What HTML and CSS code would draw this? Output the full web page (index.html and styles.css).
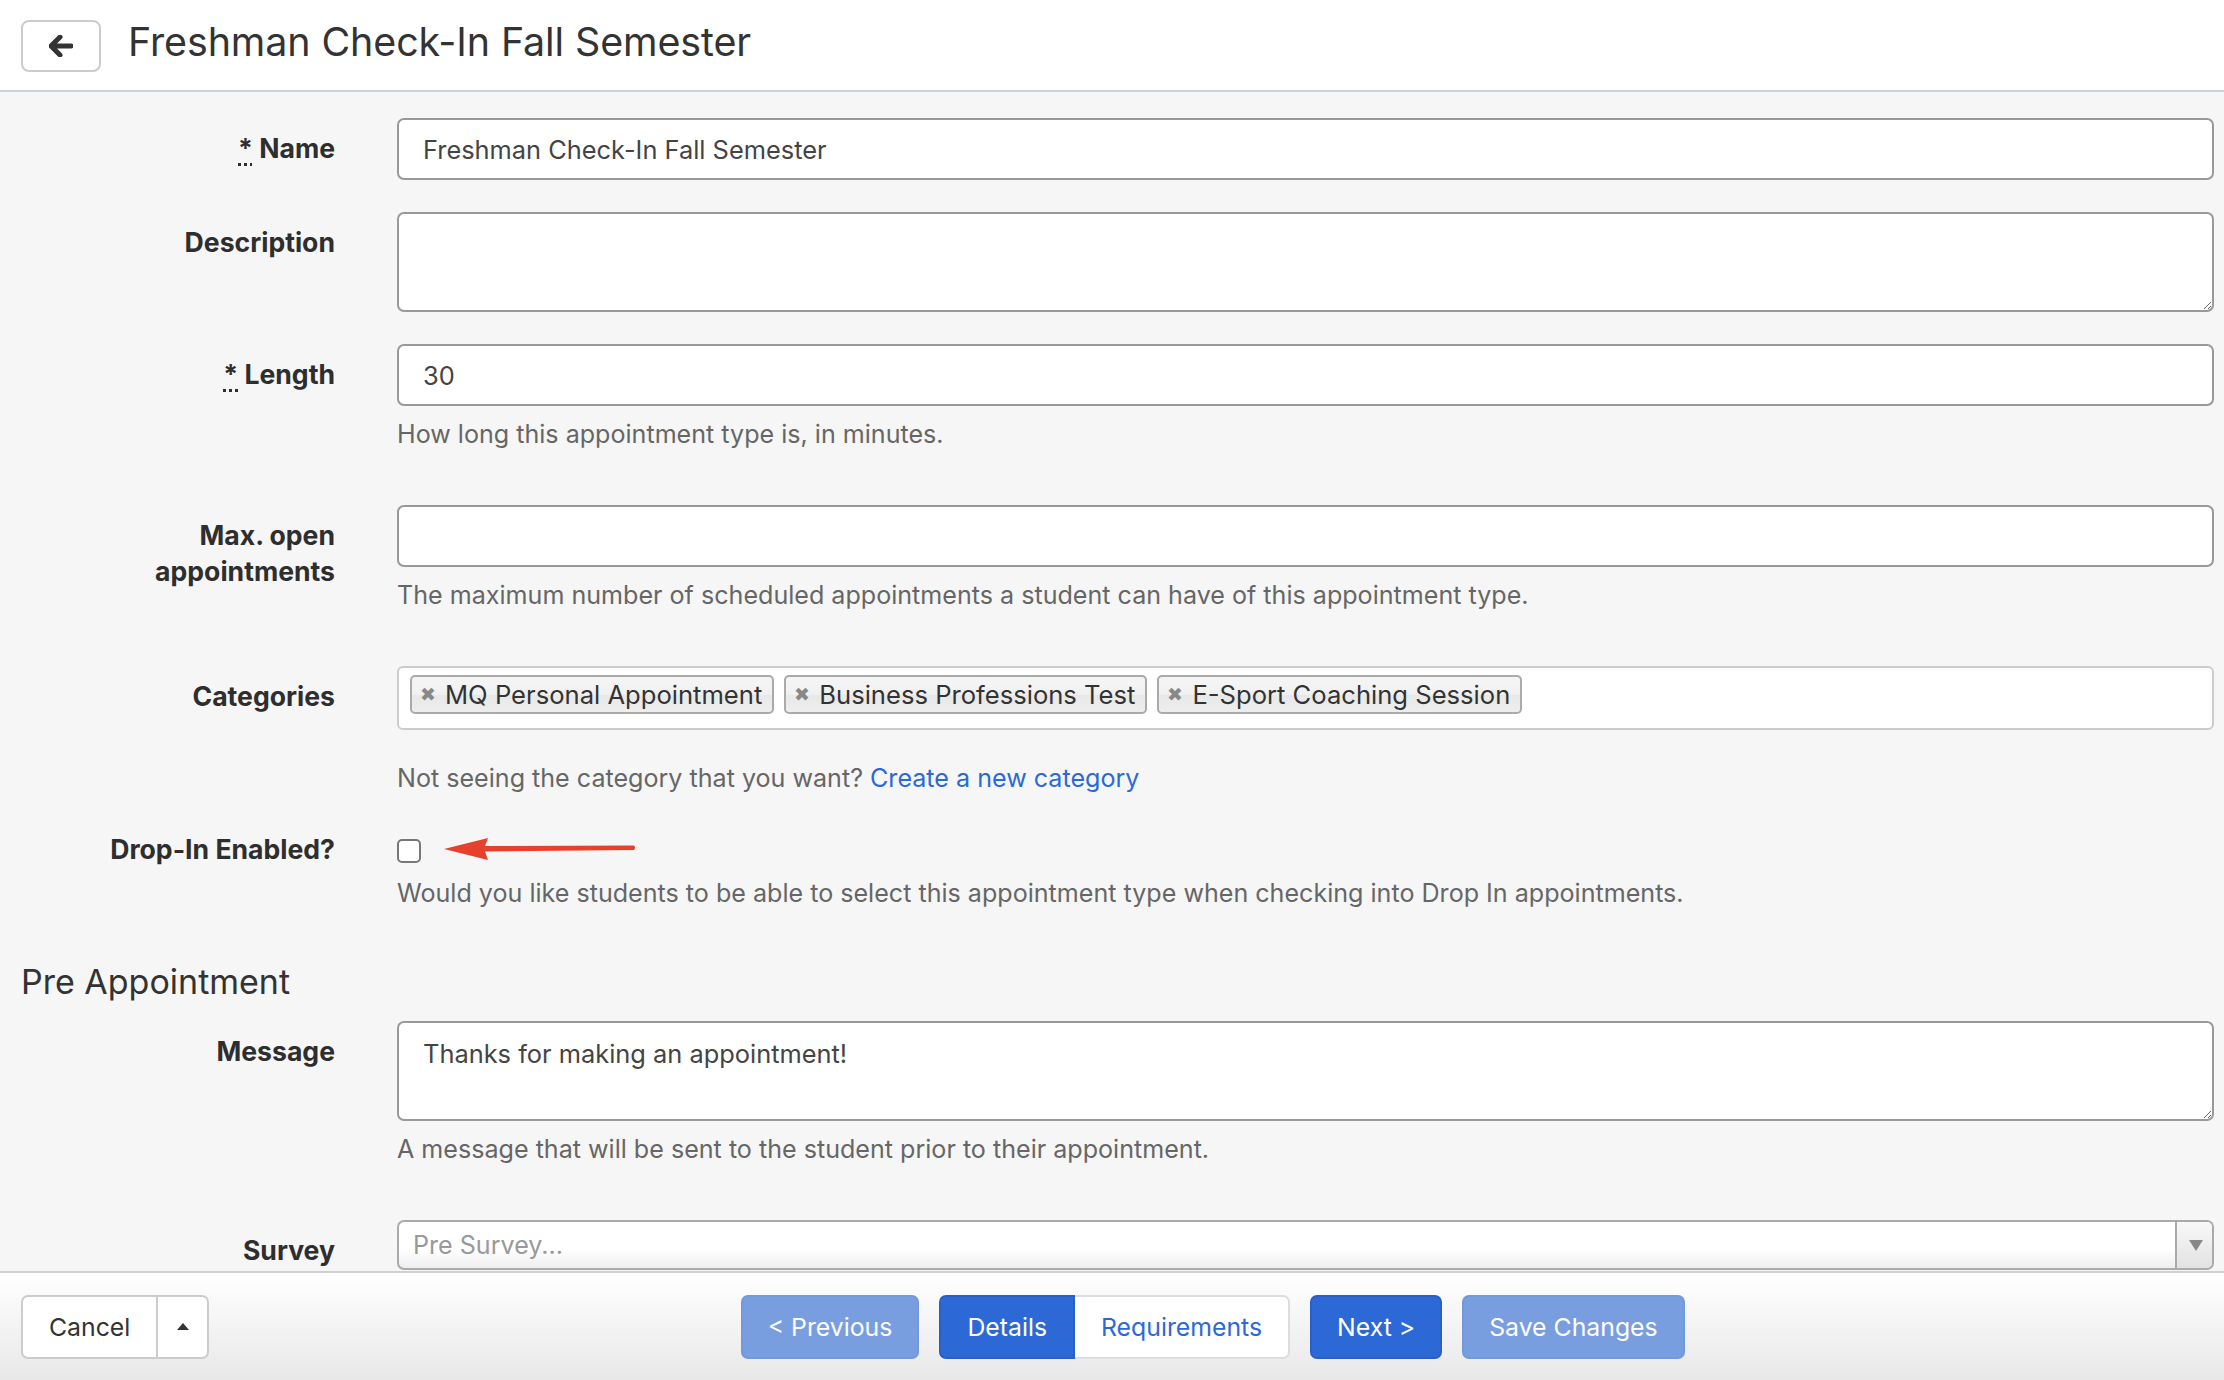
FILE: index.html
```html
<!DOCTYPE html>
<html lang="en">
<head>
  <meta charset="UTF-8">
  <title>Freshman Check-In Fall Semester</title>
  <link rel="stylesheet" href="styles.css">
</head>
<body>
  <header class="page-header">
    <a href="#" class="back-button" aria-label="Back">
      <svg width="24" height="22" viewBox="0 0 24 22">
        <path d="M11 2 L2 11 L11 20 M2.5 11 H22" fill="none" stroke="#333" stroke-width="5" stroke-linecap="round" stroke-linejoin="round"/>
      </svg>
    </a>
    <h1>Freshman Check-In Fall Semester</h1>
  </header>

  <main class="form">
    <div class="row">
      <label class="label"><abbr title="required">*</abbr> Name</label>
      <div class="control">
        <input class="text-input" type="text" value="Freshman Check-In Fall Semester">
      </div>
    </div>

    <div class="row">
      <label class="label">Description</label>
      <div class="control">
        <textarea class="text-area"></textarea>
      </div>
    </div>

    <div class="row">
      <label class="label"><abbr title="required">*</abbr> Length</label>
      <div class="control">
        <input class="text-input" type="text" value="30">
        <p class="help">How long this appointment type is, in minutes.</p>
      </div>
    </div>

    <div class="row">
      <label class="label">Max. open<br>appointments</label>
      <div class="control">
        <input class="text-input" type="text" value="">
        <p class="help">The maximum number of scheduled appointments a student can have of this appointment type.</p>
      </div>
    </div>

    <div class="row row-categories">
      <label class="label">Categories</label>
      <div class="control">
        <div class="chosen-box">
          <span class="tag"><span class="tag-close">&#10006;</span>MQ Personal Appointment</span>
          <span class="tag"><span class="tag-close">&#10006;</span>Business Professions Test</span>
          <span class="tag"><span class="tag-close">&#10006;</span>E-Sport Coaching Session</span>
        </div>
        <p class="help help-wide">Not seeing the category that you want? <a href="#" class="link">Create a new category</a></p>
      </div>
    </div>

    <div class="row row-check">
      <label class="label">Drop-In Enabled?</label>
      <div class="control">
        <div class="check-line">
          <input type="checkbox" class="checkbox">
          <svg class="pointer" width="192" height="26" viewBox="0 0 192 26">
            <path d="M0 13 L44 2 L41 10 L190 9.5 Q192 11.5 190 14 L41 15.5 L44 24 Z" fill="#e5412d"/>
          </svg>
        </div>
        <p class="help help-check">Would you like students to be able to select this appointment type when checking into Drop In appointments.</p>
      </div>
    </div>

    <h2 class="section-title">Pre Appointment</h2>

    <div class="row">
      <label class="label">Message</label>
      <div class="control">
        <textarea class="text-area">Thanks for making an appointment!</textarea>
        <p class="help">A message that will be sent to the student prior to their appointment.</p>
      </div>
    </div>

    <div class="row">
      <label class="label">Survey</label>
      <div class="control">
        <div class="chosen-single">
          <span class="placeholder">Pre Survey...</span>
          <span class="chosen-arrow"></span>
        </div>
      </div>
    </div>
  </main>

  <footer class="page-footer">
    <div class="btn-group">
      <button class="btn btn-plain">Cancel</button>
      <button class="btn btn-plain btn-caret"><span class="caret-up"></span></button>
    </div>
    <div class="wizard">
      <button class="btn btn-faded">&lt; Previous</button>
      <div class="btn-group steps">
        <button class="btn btn-primary">Details</button>
        <button class="btn btn-step">Requirements</button>
      </div>
      <button class="btn btn-primary">Next &gt;</button>
      <button class="btn btn-faded">Save Changes</button>
    </div>
  </footer>
</body>
</html>
```

FILE: styles.css
```css
* {
  margin: 0;
  padding: 0;
  box-sizing: border-box;
}

body {
  font-family: 'Inter', 'Liberation Sans', sans-serif;
  font-size: 25.1px;
  color: #333;
  background: #f6f6f6;
  overflow: hidden;
  height: 1380px;
}

.page-header {
  background: #fff;
  height: 92px;
  border-bottom: 2px solid #c9d1d9;
  display: flex;
  align-items: center;
  padding: 0 21px;
}

.back-button {
  width: 80px;
  height: 52px;
  margin-top: 2px;
  border: 2px solid #ccc;
  border-radius: 8px;
  background: #fff;
  display: flex;
  align-items: center;
  justify-content: center;
}

.page-header h1 {
  font-size: 39.4px;
  font-weight: 400;
  color: #333;
  margin-left: 27px;
  margin-top: -7px;
  letter-spacing: -0.1px;
}

.form {
  padding: 26px 10px 0 21px;
}

.row {
  display: grid;
  grid-template-columns: 314px 1fr;
  column-gap: 62px;
  margin-bottom: 32px;
}

.label {
  text-align: right;
  font-size: 26.6px;
  font-weight: 700;
  line-height: 36px;
  padding-top: 12px;
  color: #2e2e2e;
}

.label abbr {
  text-decoration: underline dotted 3px;
  text-underline-offset: 5px;
  border: none;
}

.text-input,
.text-area {
  display: block;
  width: 100%;
  font-family: inherit;
  font-size: 25.4px;
  color: #444;
  background: #fff;
  border: 2px solid #999;
  border-radius: 7px;
  padding: 0 24px;
  outline: none;
}

.text-input {
  height: 62px;
}

.text-area {
  height: 100px;
  padding-top: 14px;
  line-height: 34px;
  resize: vertical;
}

.help {
  color: #666;
  line-height: 34px;
  margin: 11px 0 22px;
}

.help-wide {
  margin-top: 31px;
  margin-bottom: 0;
}

.row-categories {
  margin-bottom: 24px;
}

.chosen-box {
  height: 64px;
  background: #fff;
  border: 2px solid #ccc;
  border-radius: 6px;
  padding: 7px 11px;
  display: flex;
  gap: 10px;
}

.tag {
  height: 39px;
  display: flex;
  align-items: center;
  padding: 0 10px 0 8px;
  border: 2px solid #aaa;
  border-radius: 5px;
  background: linear-gradient(#f4f4f4 20%, #f0f0f0 50%, #e8e8e8 52%, #eee);
  color: #333;
  font-size: 25.6px;
  white-space: nowrap;
}

.tag-close {
  font-size: 19px;
  color: #888;
  margin-right: 9px;
}

.link {
  color: #2a6ad8;
  text-decoration: none;
}

.row-check {
  margin-bottom: 0;
}

.check-line {
  display: flex;
  align-items: center;
  height: 36px;
  margin-top: 12px;
}

.checkbox {
  appearance: none;
  width: 24px;
  height: 24px;
  border: 2px solid #777;
  border-radius: 5px;
  background: #fff;
  margin-top: 4px;
}

.pointer {
  margin-left: 23px;
}

.help-check {
  margin-top: 9px;
  margin-bottom: 0;
}

.section-title {
  font-size: 34px;
  font-weight: 400;
  color: #333;
  line-height: 42px;
  margin: 51px 0 18px;
}

.chosen-single {
  height: 50px;
  background: linear-gradient(#fff 60%, #eee);
  border: 2px solid #aaa;
  border-radius: 7px;
  display: flex;
  align-items: center;
  overflow: hidden;
}

.placeholder {
  flex: 1;
  color: #999;
  padding-left: 14px;
}

.chosen-arrow {
  width: 37px;
  height: 100%;
  border-left: 2px solid #aaa;
  background: linear-gradient(#f8f8f8, #e2e2e2);
  position: relative;
}

.chosen-arrow::after {
  content: "";
  position: absolute;
  left: 12px;
  top: 18px;
  border-left: 7px solid transparent;
  border-right: 7px solid transparent;
  border-top: 11px solid #888;
}

.page-footer {
  position: fixed;
  left: 0;
  right: 0;
  bottom: 0;
  height: 109px;
  border-top: 2px solid #d0d0d0;
  background: linear-gradient(#fff, #e8e8e8);
  display: flex;
  align-items: center;
  padding: 0 8px 0 21px;
}

.wizard {
  flex: 1;
  display: flex;
  justify-content: center;
  gap: 20px;
}

.btn-group {
  display: flex;
}

.btn {
  height: 64px;
  font-family: inherit;
  font-size: 24.8px;
  padding: 0 25px;
  border-radius: 7px;
  border: 2px solid transparent;
  cursor: pointer;
}

.btn-plain {
  background: #fff;
  border-color: #ccc;
  color: #333;
}

.btn-group .btn-plain:first-child {
  border-radius: 7px 0 0 7px;
  padding: 0 26px;
}

.btn-caret {
  width: 51px;
  padding: 0;
  border-left: none;
  border-radius: 0 7px 7px 0;
  display: flex;
  align-items: center;
  justify-content: center;
}

.caret-up {
  border-left: 6px solid transparent;
  border-right: 6px solid transparent;
  border-bottom: 7px solid #333;
}

.btn-faded {
  background: #789ee0;
  border-color: #7199de;
  color: #fff;
}

.btn-primary {
  background: #2d69d6;
  border-color: #2a60c6;
  color: #fff;
}

.steps .btn-primary {
  border-radius: 7px 0 0 7px;
  padding: 0 26px;
}

.btn-step {
  background: #fff;
  border-color: #ddd;
  border-left: none;
  border-radius: 0 7px 7px 0;
  color: #2d69d6;
  padding: 0 26px;
}
```
